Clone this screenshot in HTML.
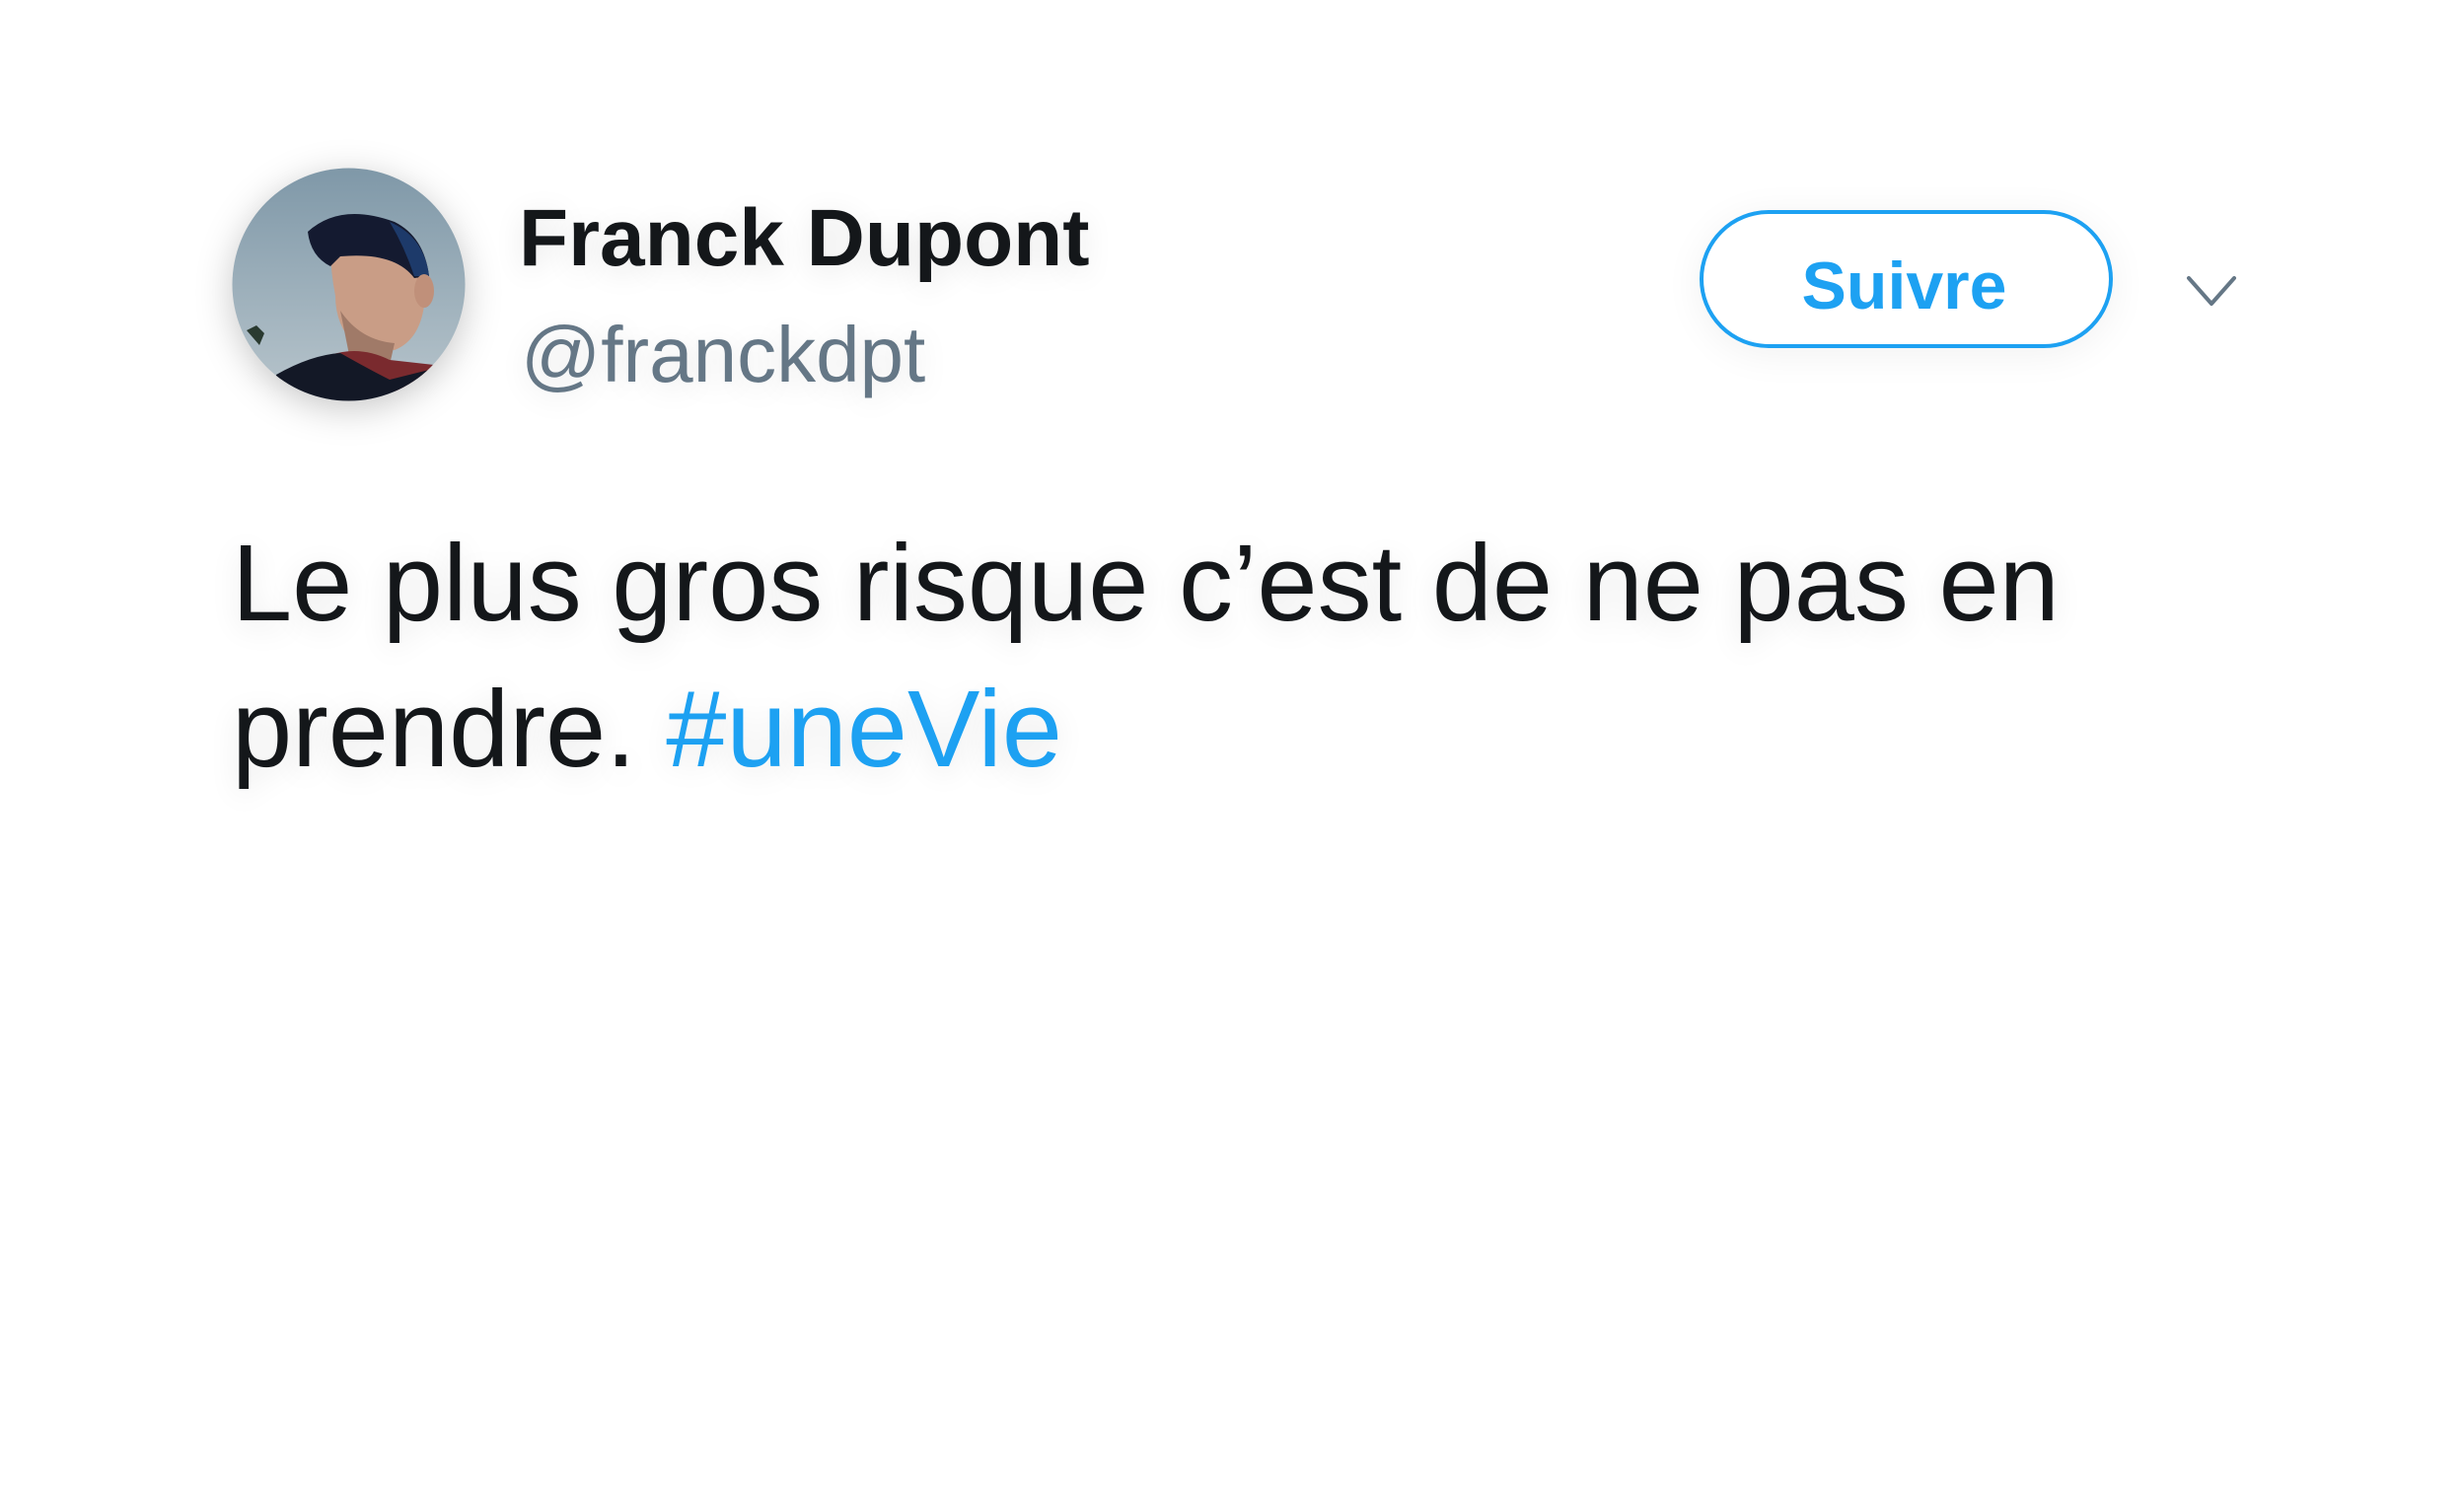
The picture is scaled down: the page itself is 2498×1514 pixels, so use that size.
<!DOCTYPE html>
<html><head><meta charset="utf-8"><style>
html,body{margin:0;padding:0;background:#fff;width:2498px;height:1514px;overflow:hidden;font-family:"Liberation Sans",Arial,sans-serif}
.a{position:absolute;white-space:nowrap}
.sh{text-shadow:0 6px 30px rgba(0,0,0,0.10)}
</style></head><body>
<svg class="a" style="left:235px;top:170px;filter:drop-shadow(0 8px 18px rgba(0,0,0,0.22))" width="237" height="237" viewBox="0 0 237 237">
<defs><clipPath id="c"><circle cx="118.5" cy="118.5" r="118"/></clipPath>
<linearGradient id="s" x1="0" y1="0" x2="0" y2="1"><stop offset="0" stop-color="#7f98a8"/><stop offset="1" stop-color="#b8c5cc"/></linearGradient></defs>
<g clip-path="url(#c)">
<rect width="237" height="237" fill="url(#s)"/>
<path d="M15 165 l10 -5 l8 8 l-5 12 z" fill="#2a3a30"/>
<path d="M100 80 Q150 70 190 100 L195 140 Q190 175 165 185 L125 180 Q105 160 105 130 Q100 105 100 80Z" fill="#c99d86"/>
<path d="M110 145 Q130 175 165 178 L160 200 L120 195Z" fill="#a07a68"/>
<path d="M77 65 Q110 35 165 55 Q195 70 200 110 L185 112 Q165 85 110 90 L100 100 Q80 90 77 65Z" fill="#141a30"/>
<path d="M160 55 Q195 70 200 110 L185 110 Q175 80 160 55Z" fill="#1d3a6a"/>
<ellipse cx="195" cy="125" rx="10" ry="17" fill="#c0907a"/>
<path d="M100 190 Q130 180 160 195 L205 200 L210 210 L175 230 L120 215Z" fill="#7a2a2e"/>
<path d="M45 210 Q80 190 110 188 Q140 205 160 215 L200 205 L215 237 L40 237Z" fill="#131826"/>
</g></svg>
<div class="a sh" style="left:526px;top:192px;font-size:82px;font-weight:bold;color:#14171a;line-height:100px">Franck Dupont</div>
<div class="a sh" style="left:528px;top:310px;font-size:80px;color:#657786;line-height:100px">@franckdpt</div>
<div class="a" style="left:1723px;top:213px;width:411px;height:132px;border:4px solid #1da1f2;border-radius:70px;box-shadow:0 6px 40px rgba(0,0,0,0.06)"></div>
<div class="a" style="left:1725px;top:240px;width:411px;text-align:center;font-size:68px;font-weight:bold;color:#1da1f2;line-height:100px">Suivre</div>
<svg class="a" style="left:2214px;top:276px" width="56" height="40" viewBox="0 0 56 40"><path d="M5 6 L28 32 L51 6" fill="none" stroke="#657786" stroke-width="4" stroke-linecap="round" stroke-linejoin="round"/></svg>
<div class="a sh" style="left:235px;top:518px;font-size:110px;color:#14171a;line-height:148px">Le plus gros risque c’est de ne pas en<br>prendre. <span style="color:#1da1f2">#uneVie</span></div>
</body></html>
